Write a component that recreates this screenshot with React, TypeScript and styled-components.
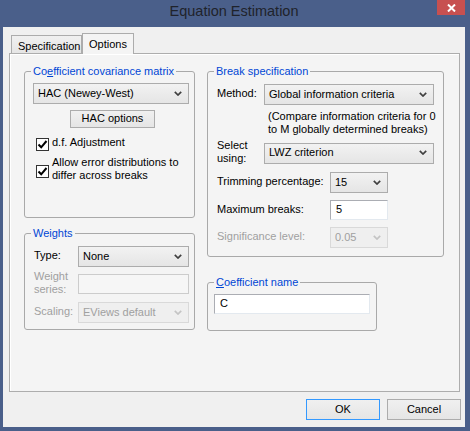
import styled, { createGlobalStyle } from 'styled-components';

const GlobalStyle = createGlobalStyle`
  html, body {
    margin: 0;
    padding: 0;
    background: #4a5f8a;
  }
  body {
    font-family: 'Liberation Sans', Arial, sans-serif;
    font-size: 11px;
    color: #000;
  }
  * {
    box-sizing: border-box;
  }
`;

const Window = styled.div`
  width: 470px;
  height: 431px;
  background: #4a5f8a;
  display: flex;
  flex-direction: column;
`;

const TitleBar = styled.div`
  height: 27px;
  flex-shrink: 0;
  display: grid;
  grid-template-columns: 1fr auto 1fr;
  padding: 0 5px 0 3px;
`;

const Title = styled.div`
  grid-column: 2;
  font-size: 14.5px;
  line-height: 22px;
  color: #1f232b;
`;

const CloseButton = styled.div`
  grid-column: 3;
  justify-self: end;
  width: 28px;
  height: 15px;
  background: #c75050;
  display: flex;
  align-items: center;
  justify-content: center;
`;

const Client = styled.div`
  flex: 1;
  margin: 0 5px 4px 3px;
  background: #f0f0f0;
  padding: 6px 5px 0 6px;
  display: flex;
  flex-direction: column;
`;

const TabRow = styled.div`
  height: 20px;
  display: flex;
  align-items: flex-end;
  padding-left: 2px;
  position: relative;
  z-index: 1;
`;

const Tab = styled.div<{ $active?: boolean; $w: number }>`
  width: ${(p) => p.$w}px;
  height: ${(p) => (p.$active ? 21 : 18)}px;
  margin-bottom: ${(p) => (p.$active ? -1 : 0)}px;
  border: 1px solid #acacac;
  border-bottom: none;
  background: ${(p) => (p.$active ? '#f4f4f4' : 'linear-gradient(#f0f0f0, #e5e5e5)')};
  padding: 2px 0 0 6px;
  line-height: 16px;
  white-space: nowrap;
`;

const Panel = styled.div`
  height: 339px;
  border: 1px solid #adadad;
  background: #f4f4f4;
  box-shadow: inset 1px 1px 0 #fff;
  padding: 10px 14px 0;
  display: grid;
  grid-template-columns: 171px 237px;
  column-gap: 12px;
  align-items: start;
`;

const Column = styled.div<{ $gap: number }>`
  display: flex;
  flex-direction: column;
  align-items: flex-start;
  gap: ${(p) => p.$gap}px;
`;

const GroupBox = styled.fieldset<{ $w: number; $h: number; $pt: number }>`
  margin: 0;
  min-width: 0;
  width: ${(p) => p.$w}px;
  height: ${(p) => p.$h}px;
  border: 1px solid #a9a9a9;
  border-radius: 3px;
  padding: ${(p) => p.$pt}px 5px 0 8px;
  display: flex;
  flex-direction: column;
  align-items: flex-start;
`;

const Legend = styled.legend`
  padding: 0 2px;
  margin-left: -2px;
  line-height: 14px;
  color: #0046d5;
`;

const Combo = styled.div<{ $w: number; $disabled?: boolean }>`
  width: ${(p) => p.$w}px;
  height: 21px;
  flex-shrink: 0;
  display: flex;
  align-items: center;
  justify-content: space-between;
  padding: 0 6px 1px 4px;
  line-height: 13px;
  border: 1px solid ${(p) => (p.$disabled ? '#d9d9d9' : '#acacac')};
  background: ${(p) => (p.$disabled ? '#efefef' : 'linear-gradient(#f2f2f2, #e5e5e5)')};
  color: ${(p) => (p.$disabled ? '#a0a0a0' : '#000')};
  white-space: nowrap;
`;

const TextBox = styled.div<{ $w: number; $disabled?: boolean }>`
  width: ${(p) => p.$w}px;
  height: 20px;
  flex-shrink: 0;
  display: flex;
  align-items: center;
  padding: 0 4px 1px 5px;
  line-height: 13px;
  border: 1px solid;
  border-color: ${(p) =>
    p.$disabled ? '#cccccc' : '#abadb3 #e3e9ef #e3e9ef #abadb3'};
  background: ${(p) => (p.$disabled ? '#f6f6f6' : '#fff')};
`;

const PushButton = styled.div<{ $w: number; $h: number; $default?: boolean }>`
  width: ${(p) => p.$w}px;
  height: ${(p) => p.$h}px;
  display: flex;
  align-items: center;
  justify-content: center;
  padding-bottom: 1px;
  border: 1px solid ${(p) => (p.$default ? '#3399ff' : '#acacac')};
  background: linear-gradient(#f0f0f0, #e5e5e5);
  line-height: 13px;
`;

const CheckRow = styled.div<{ $mt: number }>`
  display: flex;
  align-items: center;
  gap: 3px;
  margin: ${(p) => p.$mt}px 0 0 3px;
`;

const CheckBox = styled.div`
  width: 13px;
  height: 13px;
  flex-shrink: 0;
  border: 1px solid #333;
  background: #fff;
  display: flex;
  align-items: center;
  justify-content: center;
`;

const CheckText = styled.span`
  line-height: 13px;
  padding-bottom: 4px;
`;

const FormRow = styled.div<{ $labelW: number; $mt: number }>`
  display: grid;
  grid-template-columns: ${(p) => p.$labelW}px auto;
  align-items: center;
  margin-top: ${(p) => p.$mt}px;
`;

const Label = styled.span<{ $disabled?: boolean }>`
  line-height: 13px;
  padding: 0 0 2px 1px;
  color: ${(p) => (p.$disabled ? '#a0a0a0' : '#000')};
`;

const Note = styled.div`
  margin: 5px 0 0 52px;
  line-height: 13px;
  white-space: nowrap;
`;

const ButtonRow = styled.div`
  display: flex;
  justify-content: flex-end;
  gap: 7px;
  margin: 7px -1px 0 0;
`;

const Chevron = ({ disabled }: { disabled?: boolean }) => (
  <svg width="8" height="5" viewBox="0 0 8 5">
    <polyline
      points="0.8,0.8 4,4 7.2,0.8"
      fill="none"
      stroke={disabled ? '#c4c4c4' : '#404040'}
      strokeWidth="1.7"
    />
  </svg>
);

const Check = () => (
  <svg width="11" height="11" viewBox="0 0 11 11">
    <polyline points="1.5,5.5 4.2,8.3 9.5,2" fill="none" stroke="#000" strokeWidth="2" />
  </svg>
);

type SelectProps = { value: string; w: number; disabled?: boolean };

const Select = ({ value, w, disabled }: SelectProps) => (
  <Combo $w={w} $disabled={disabled}>
    <span>{value}</span>
    <Chevron disabled={disabled} />
  </Combo>
);

export default function App() {
  return (
    <>
      <GlobalStyle />
      <Window>
        <TitleBar>
          <Title>Equation Estimation</Title>
          <CloseButton>
            <svg width="9" height="8" viewBox="0 0 9 8">
              <path d="M1 0.5 L8 7.5 M8 0.5 L1 7.5" stroke="#fff" strokeWidth="2" />
            </svg>
          </CloseButton>
        </TitleBar>
        <Client>
          <TabRow>
            <Tab $w={71}>Specification</Tab>
            <Tab $w={52} $active>
              Options
            </Tab>
          </TabRow>
          <Panel>
            <Column $gap={8}>
              <GroupBox $w={171} $h={154} $pt={5}>
                <Legend>
                  Co<u>e</u>fficient covariance matrix
                </Legend>
                <Select value="HAC (Newey-West)" w={156} />
                <PushButton $w={85} $h={18} style={{ marginTop: 6, marginLeft: 37 }}>
                  HAC options
                </PushButton>
                <CheckRow $mt={8}>
                  <CheckBox>
                    <Check />
                  </CheckBox>
                  <CheckText>d.f. Adjustment</CheckText>
                </CheckRow>
                <CheckRow $mt={3}>
                  <CheckBox>
                    <Check />
                  </CheckBox>
                  <CheckText>
                    Allow error distributions to
                    <br />
                    differ across breaks
                  </CheckText>
                </CheckRow>
              </GroupBox>
              <GroupBox $w={171} $h={104} $pt={6}>
                <Legend>Weights</Legend>
                <FormRow $labelW={45} $mt={0}>
                  <Label>Type:</Label>
                  <Select value="None" w={111} />
                </FormRow>
                <FormRow $labelW={45} $mt={3}>
                  <Label $disabled>
                    Weight
                    <br />
                    series:
                  </Label>
                  <TextBox $w={111} $disabled />
                </FormRow>
                <FormRow $labelW={45} $mt={4}>
                  <Label $disabled>Scaling:</Label>
                  <Select value="EViews default" w={111} disabled />
                </FormRow>
              </GroupBox>
            </Column>
            <Column $gap={18}>
              <GroupBox $w={237} $h={193} $pt={6}>
                <Legend>Break specification</Legend>
                <FormRow $labelW={48} $mt={0}>
                  <Label>Method:</Label>
                  <Select value="Global information criteria" w={170} />
                </FormRow>
                <Note>
                  (Compare information criteria for 0
                  <br />
                  to M globally determined breaks)
                </Note>
                <FormRow $labelW={48} $mt={3}>
                  <Label>
                    Select
                    <br />
                    using:
                  </Label>
                  <Select value="LWZ criterion" w={170} />
                </FormRow>
                <FormRow $labelW={114} $mt={5}>
                  <Label>Trimming percentage:</Label>
                  <Select value="15" w={58} />
                </FormRow>
                <FormRow $labelW={114} $mt={7}>
                  <Label>Maximum breaks:</Label>
                  <TextBox $w={58}>5</TextBox>
                </FormRow>
                <FormRow $labelW={114} $mt={7}>
                  <Label $disabled>Significance level:</Label>
                  <Select value="0.05" w={58} disabled />
                </FormRow>
              </GroupBox>
              <GroupBox $w={170} $h={56} $pt={5}>
                <Legend>
                  <u>C</u>oefficient name
                </Legend>
                <TextBox $w={156} style={{ marginLeft: -2 }}>
                  C
                </TextBox>
              </GroupBox>
            </Column>
          </Panel>
          <ButtonRow>
            <PushButton $w={74} $h={21} $default>
              OK
            </PushButton>
            <PushButton $w={74} $h={21}>
              Cancel
            </PushButton>
          </ButtonRow>
        </Client>
      </Window>
    </>
  );
}
